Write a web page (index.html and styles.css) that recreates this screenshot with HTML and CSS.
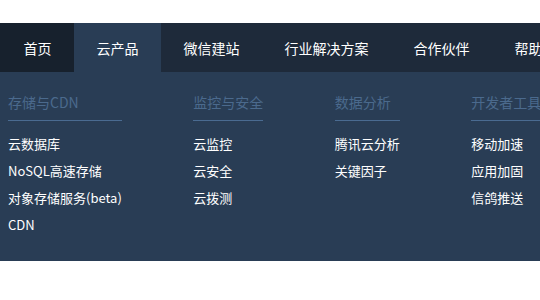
FILE: index.html
```html
<!DOCTYPE html>
<html lang="zh-CN">
<head>
<meta charset="utf-8">
<title>云产品</title>
<link rel="stylesheet" href="styles.css">
</head>
<body>
<div class="header">
  <nav class="nav">
    <a class="nav-item home">首页</a>
    <a class="nav-item active">云产品</a>
    <a class="nav-item">微信建站</a>
    <a class="nav-item">行业解决方案</a>
    <a class="nav-item">合作伙伴</a>
    <a class="nav-item">帮助与文档</a>
  </nav>
  <div class="panel">
    <div class="col">
      <div class="col-title">存储与CDN</div>
      <ul class="col-list">
        <li>云数据库</li>
        <li>NoSQL高速存储</li>
        <li>对象存储服务(beta)</li>
        <li>CDN</li>
      </ul>
    </div>
    <div class="col">
      <div class="col-title">监控与安全</div>
      <ul class="col-list">
        <li>云监控</li>
        <li>云安全</li>
        <li>云拨测</li>
      </ul>
    </div>
    <div class="col">
      <div class="col-title">数据分析</div>
      <ul class="col-list">
        <li>腾讯云分析</li>
        <li>关键因子</li>
      </ul>
    </div>
    <div class="col">
      <div class="col-title">开发者工具</div>
      <ul class="col-list">
        <li>移动加速</li>
        <li>应用加固</li>
        <li>信鸽推送</li>
      </ul>
    </div>
  </div>
</div>
</body>
</html>
```

FILE: styles.css
```css
html, body {
  margin: 0;
  padding: 0;
  background: #ffffff;
  overflow: hidden;
}
body {
  font-family: "Noto Sans CJK SC", "Microsoft YaHei", sans-serif;
  color: #ffffff;
}
.header {
  margin-top: 23px;
  width: 540px;
}
.nav {
  display: flex;
  height: 49px;
  background: #1e2a3a;
  white-space: nowrap;
  overflow: hidden;
}
.nav-item {
  flex: none;
  display: flex;
  align-items: center;
  padding: 0 22.5px;
  font-size: 14px;
  color: #ffffff;
  text-decoration: none;
}
.nav-item.home {
  padding-left: 23.5px;
  padding-right: 22.5px;
  background: #17212d;
}
.nav-item.active {
  background: #293d55;
}
.panel {
  display: flex;
  gap: 71.5px;
  padding: 20px 0 23px 8px;
  background: #293d55;
  white-space: nowrap;
  overflow: hidden;
}
.col {
  flex: none;
  display: flex;
  flex-direction: column;
}
.col-title {
  font-size: 14px;
  line-height: 20px;
  padding-bottom: 8px;
  color: #4b6a8d;
  border-bottom: 1px solid #4a6b91;
}
.col-list {
  list-style: none;
  margin: 0;
  padding: 9px 0 0;
}
.col-list li {
  font-size: 13px;
  line-height: 27px;
  color: #ffffff;
}
```
